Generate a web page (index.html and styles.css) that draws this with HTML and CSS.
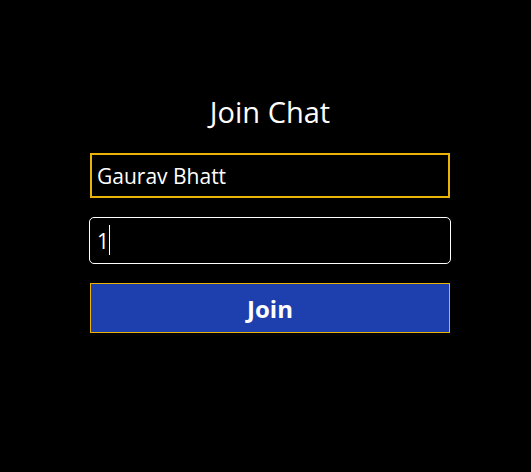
FILE: index.html
```html
<!DOCTYPE html>
<html lang="en">
<head>
<meta charset="utf-8">
<title>Join Chat</title>
<link rel="stylesheet" href="styles.css">
</head>
<body>
<main class="page">
  <form class="join-form">
    <h1 class="title">Join Chat</h1>
    <input class="field field-name" type="text" value="Gaurav Bhatt">
    <div class="field-wrap">
      <input class="field field-room" type="text" value="1">
      <span class="caret"></span>
    </div>
    <button class="join-btn" type="button">Join</button>
  </form>
</main>
</body>
</html>
```
FILE: styles.css
```css
html, body {
  margin: 0;
  padding: 0;
  background: #000;
  height: 100%;
}
body {
  font-family: "Open Sans", "Noto Sans", sans-serif;
  color: #fff;
}
.page {
  display: flex;
  justify-content: flex-start;
  padding: 92px 0 0 90px;
}
.join-form {
  width: 360px;
  display: flex;
  flex-direction: column;
}
.title {
  margin: 0 0 21px 0;
  font-weight: 400;
  font-size: 29px;
  line-height: 40px;
  text-align: center;
}
.field {
  box-sizing: border-box;
  width: 100%;
  background: #000;
  color: #fff;
  font-family: inherit;
  font-size: 21px;
  padding: 0 5px;
  margin: 0;
  outline: none;
}
.field-name {
  height: 45px;
  border: 2px solid #eab308;
  border-radius: 0;
}
.field-wrap {
  position: relative;
  margin: 19px -1px 0 -1px;
}
.field-room {
  display: block;
  height: 47px;
  width: 362px;
  border: 1px solid #fff;
  border-radius: 5px;
  padding-left: 7px;
}
.caret {
  position: absolute;
  left: 20px;
  top: 8px;
  width: 1px;
  height: 30px;
  background: #fff;
}
.join-btn {
  box-sizing: border-box;
  margin-top: 19px;
  width: 100%;
  height: 50px;
  background: #1e40af;
  border: 1px solid #eab308;
  color: #fff;
  font-family: inherit;
  font-weight: 700;
  font-size: 24px;
  padding: 0;
}
```
